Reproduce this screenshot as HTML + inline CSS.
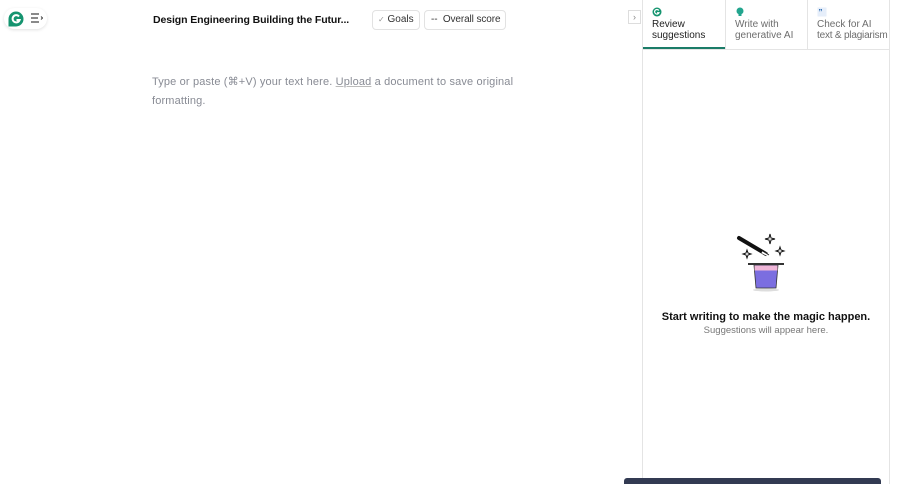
<!DOCTYPE html>
<html><head><style>
body{margin:0;width:900px;height:484px;background:#fff;font-family:"Liberation Sans",sans-serif;position:relative;overflow:hidden}
.a{position:absolute}
.btn{position:absolute;top:10px;height:18px;border:1px solid #e2e2e2;border-radius:4px;font-size:10px;color:#333;line-height:18px;padding:0 6px;box-sizing:content-box}
.tab{position:absolute;top:0;height:49px;font-size:10px;line-height:11px;color:#6d6d6d;padding-left:9px;box-sizing:border-box;white-space:nowrap}
</style></head><body>
<div class="a" style="left:4px;top:8px;width:43px;height:21px;border-radius:11px;box-shadow:0 1px 3px rgba(0,0,0,.12)"></div>
<svg class="a" style="left:8px;top:11px" width="16" height="16" viewBox="0 0 16 16"><circle cx="8" cy="8" r="7.5" fill="#15946f"/><path d="M0.5 8V15.5H8Z" fill="#15946f"/><path d="M11 5.5A3.6 3.6 0 1 0 11.6 9H8.5" fill="none" stroke="#fff" stroke-width="2"/></svg>
<svg class="a" style="left:31px;top:13px" width="12" height="10" viewBox="0 0 12 10"><path d="M0 1H8M0 5H7M0 9H8" stroke="#444" stroke-width="1.2"/><path d="M10 3.5L11.5 5L10 6.5" fill="none" stroke="#444" stroke-width="1"/></svg>
<div class="a" style="left:153px;top:14px;font-size:10.5px;font-weight:bold;color:#111;letter-spacing:-0.1px">Design Engineering Building the Futur...</div>
<div class="btn" style="left:372px;padding:0 5px"><span style="color:#999;font-size:8px">&#10003;</span> Goals</div>
<div class="btn" style="left:424px;padding:0 5px 0 6px;letter-spacing:-0.1px">-- &nbsp;Overall score</div>
<div class="a" style="left:152px;top:73px;width:380px;font-size:11px;letter-spacing:0.15px;line-height:19px;color:#888b94">Type or paste (⌘+V) your text here. <span style="text-decoration:underline;text-decoration-color:#bbb">Upload</span> a document to save original formatting.</div>
<div class="a" style="left:628px;top:10px;width:13px;height:14px;border:1px solid #ddd;box-sizing:border-box;font-size:9px;color:#888;text-align:center;line-height:12px">›</div>
<div class="a" style="left:642px;top:0;width:1px;height:484px;background:#e4e4e4"></div>
<div class="a" style="left:889px;top:0;width:1px;height:484px;background:#e4e4e4"></div>
<div class="a" style="left:643px;top:49px;width:246px;height:1px;background:#e4e4e4"></div>
<div class="tab" style="left:643px;width:82px;color:#222;border-bottom:2px solid #1b7c68"><div style="height:19px;padding-top:7px;box-sizing:border-box"><svg width="10" height="10"><circle cx="5" cy="5" r="4.5" fill="#15946f"/><path d="M6.8 3.5A2.3 2.3 0 1 0 7 5.7H5" fill="none" stroke="#fff" stroke-width="1.2"/></svg></div>Review<br>suggestions</div>
<div class="a" style="left:725px;top:0;width:1px;height:49px;background:#e4e4e4"></div>
<div class="tab" style="left:726px;width:81px"><div style="height:19px;padding-top:7px;box-sizing:border-box"><svg width="10" height="10"><circle cx="5" cy="4" r="3.5" fill="#22a58e"/><rect x="3.5" y="7" width="3" height="2" fill="#22a58e"/></svg></div>Write with<br>generative AI</div>
<div class="a" style="left:807px;top:0;width:1px;height:49px;background:#e4e4e4"></div>
<div class="tab" style="left:808px;width:81px"><div style="height:19px;padding-top:7px;box-sizing:border-box"><svg width="10" height="10"><rect x="0.5" y="0.5" width="9" height="9" fill="#e6eefa"/><text x="1.5" y="8" font-size="8" font-weight="bold" fill="#2a6bb0" font-family="Liberation Sans">”</text></svg></div>Check for AI<br><span style="letter-spacing:-0.2px">text &amp; plagiarism</span></div>
<svg class="a" style="left:736px;top:232px" width="52" height="60" viewBox="0 0 52 60">
<path d="M3 6L30 22" stroke="#111" stroke-width="4" stroke-linecap="round"/><path d="M26 20L32 23" stroke="#fff" stroke-width="2.5"/><path d="M25 18L33 23" stroke="#111" stroke-width="0.8" fill="none"/>
<path d="M34 2L35 6L39 7L35 8L34 12L33 8L29 7L33 6Z" fill="none" stroke="#111" stroke-width="1"/>
<path d="M44 15L45 18L48 19L45 20L44 23L43 20L40 19L43 18Z" fill="none" stroke="#111" stroke-width="1"/>
<path d="M11 18L12 21L15 22L12 23L11 26L10 23L7 22L10 21Z" fill="none" stroke="#111" stroke-width="1"/>
<rect x="12" y="31" width="36" height="2" fill="#333"/>
<path d="M18 33H42L40 56H20Z" fill="#7b6ee0" stroke="#333" stroke-width="0.8"/>
<rect x="18.5" y="33.5" width="23" height="5" fill="#f0b6d8"/>
<ellipse cx="30" cy="58" rx="13" ry="1.5" fill="#ddd"/>
</svg>
<div class="a" style="left:643px;top:311px;width:246px;text-align:center;font-size:11px;font-weight:bold;color:#111">Start writing to make the magic happen.</div>
<div class="a" style="left:643px;top:325px;width:246px;text-align:center;font-size:9.5px;color:#777">Suggestions will appear here.</div>
<div class="a" style="left:624px;top:478px;width:257px;height:6px;background:#323a52;border-radius:3px 3px 0 0"></div>
</body></html>
